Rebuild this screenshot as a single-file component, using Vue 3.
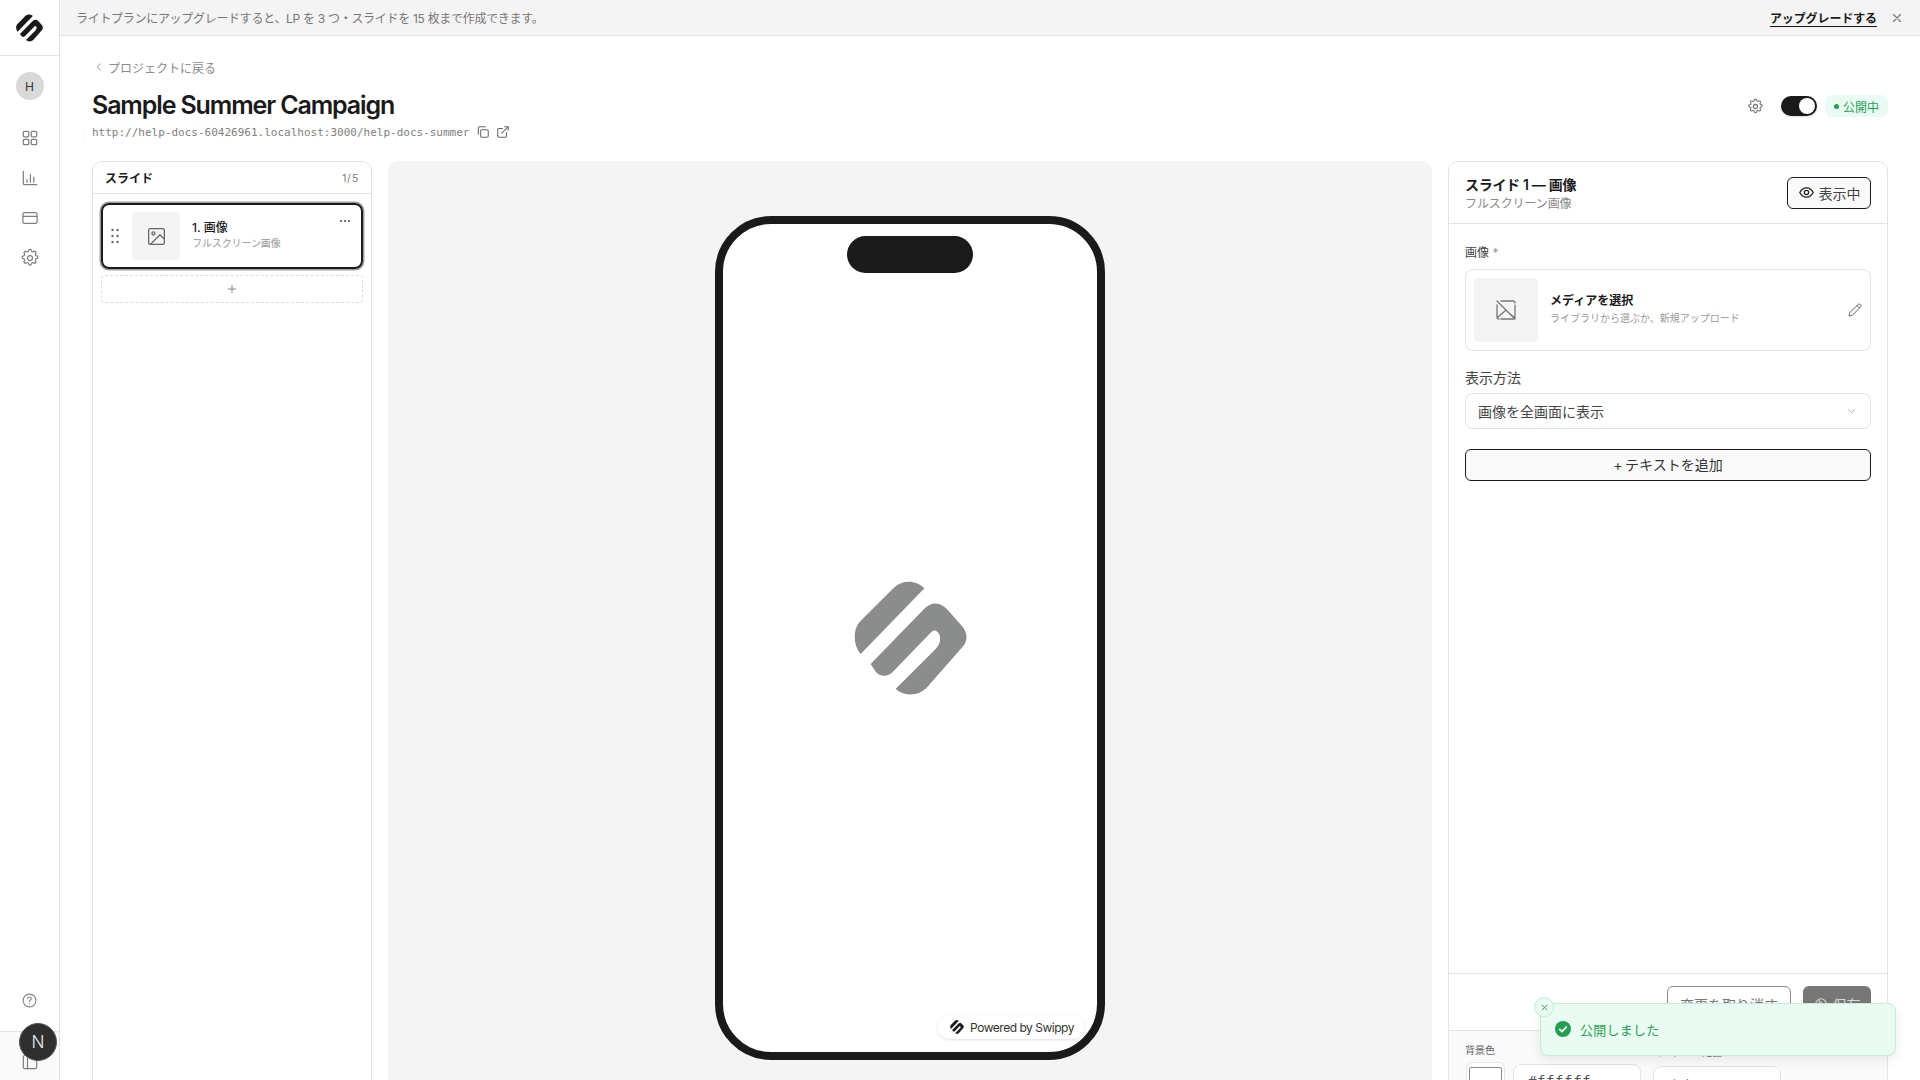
<template>
  <div class="app">
    <aside class="sidebar">
      <div class="side-logo">
        <svg width="27" height="28" viewBox="100 60 340 346"><path :d="logoPath" fill="#1a1a1a" /></svg>
      </div>
      <div class="side-nav">
        <div class="avatar">H</div>
        <svg class="nav-icon" viewBox="0 0 24 24"><rect x="4" y="4" width="6.500" height="6.500" rx="1.200" /><rect x="13.500" y="4" width="6.500" height="6.500" rx="1.200" /><rect x="4" y="13.500" width="6.500" height="6.500" rx="1.200" /><rect x="13.500" y="13.500" width="6.500" height="6.500" rx="1.200" /></svg>
        <svg class="nav-icon" viewBox="0 0 24 24"><path d="M4 4v14.500A1.500 1.500 0 0 0 5.500 20H20M8.500 17v-3M12.500 17V8M16.500 17v-6" /></svg>
        <svg class="nav-icon" viewBox="0 0 24 24"><rect x="3.500" y="5.500" width="17" height="13" rx="2" /><path d="M3.500 10h17" /></svg>
        <svg class="nav-icon" viewBox="0 0 24 24"><path :d="gearPath" /><circle cx="12" cy="12" r="3" /></svg>
      </div>
      <div class="side-bottom">
        <svg class="nav-icon help" viewBox="0 0 24 24"><circle cx="12" cy="12" r="9" /><path d="M9.500 9.500a2.500 2.500 0 1 1 3.700 2.200c-.8.500-1.200 1-1.200 1.800M12 16.800v.2" /></svg>
      </div>
      <div class="side-footer">
        <svg class="nav-icon peek" viewBox="0 0 24 24"><rect x="4" y="4" width="16" height="16" rx="2" /><path d="M9 4v16" /></svg>
      </div>
    </aside>

    <div class="main">
      <div class="banner">
        <span class="banner-text">ライトプランにアップグレードすると、LP を 3 つ・スライドを 15 枚まで作成できます。</span>
        <div class="banner-right">
          <a class="upgrade">アップグレードする</a>
          <svg class="banner-close" viewBox="0 0 24 24"><path d="M6 6l12 12M18 6L6 18" /></svg>
        </div>
      </div>

      <div class="content">
        <a class="back">
          <svg class="back-icon" viewBox="0 0 24 24"><path d="M15 6l-6 6 6 6" /></svg>
          プロジェクトに戻る
        </a>

        <div class="title-row">
          <div>
            <h1 class="title">Sample Summer Campaign</h1>
            <div class="url-row">
              <span class="url">http://help-docs-60426961.localhost:3000/help-docs-summer</span>
              <svg class="url-icon" viewBox="0 0 24 24"><rect x="8" y="8" width="13" height="13" rx="2" /><path d="M4 16V5a2 2 0 0 1 2-2h10" /></svg>
              <svg class="url-icon ext" viewBox="0 0 24 24"><path d="M18 13v6a2 2 0 0 1-2 2H5a2 2 0 0 1-2-2V8a2 2 0 0 1 2-2h6M15 3h6v6M10 14L21 3" /></svg>
            </div>
          </div>
          <div class="status">
            <svg class="status-gear" viewBox="0 0 24 24"><path :d="gearPath" /><circle cx="12" cy="12" r="3" /></svg>
            <div class="toggle"><span class="knob"></span></div>
            <div class="badge"><span class="dot"></span>公開中</div>
          </div>
        </div>

        <div class="workspace">
          <section class="panel slides">
            <div class="slides-head">
              <span class="slides-title">スライド</span>
              <span class="slides-count">1/5</span>
            </div>
            <div class="slides-body">
              <div v-for="slide in slides" :key="slide.id" class="slide-item">
                <svg class="drag" viewBox="0 0 8 16"><circle v-for="d in dragDots" :key="d.id" :cx="d.x" :cy="d.y" r="1.200" /></svg>
                <div class="slide-thumb">
                  <svg class="thumb-icon" viewBox="0 0 24 24"><rect x="3" y="3" width="18" height="18" rx="2" /><circle cx="8.500" cy="8.500" r="1.700" /><path d="M21 15l-5-5L5 21" /></svg>
                </div>
                <div class="slide-text">
                  <div class="slide-name">{{ slide.name }}</div>
                  <div class="slide-sub">{{ slide.sub }}</div>
                </div>
                <span class="slide-more"><i></i><i></i><i></i></span>
              </div>
              <div class="slide-add">
                <svg class="add-icon" viewBox="0 0 24 24"><path d="M12 5v14M5 12h14" /></svg>
              </div>
            </div>
          </section>

          <section class="canvas">
            <div class="phone">
              <div class="notch"></div>
              <svg class="phone-logo" viewBox="100 60 340 346"><path :d="logoPath" fill="#8b8d8c" /></svg>
              <div class="powered">
                <svg width="14" height="14" viewBox="100 60 340 346"><path :d="logoPath" fill="#1a1a1a" /></svg>
                Powered by Swippy
              </div>
            </div>
          </section>

          <section class="panel editor">
            <div class="editor-head">
              <div class="editor-heading">
                <div class="editor-title">スライド 1 — 画像</div>
                <div class="editor-sub">フルスクリーン画像</div>
              </div>
              <button class="view-btn">
                <svg class="eye" viewBox="0 0 24 24"><path d="M2.500 12S6 5.500 12 5.500 21.500 12 21.500 12 18 18.500 12 18.500 2.500 12 2.500 12z" /><circle cx="12" cy="12" r="3" /></svg>
                表示中
              </button>
            </div>

            <div class="editor-body">
              <div class="field-label small">画像 <span class="req">*</span></div>
              <div class="media">
                <div class="media-thumb">
                  <svg class="media-icon" viewBox="0 0 24 24"><path d="M3 3l18 18M21 7v12a2 2 0 0 1-2 2H7M3 7v12a2 2 0 0 0 2 2M7 3h12a2 2 0 0 1 2 2M3 20l9-8M15 15l6 5" /></svg>
                </div>
                <div class="media-text">
                  <div class="media-title">メディアを選択</div>
                  <div class="media-sub">ライブラリから選ぶか、新規アップロード</div>
                </div>
                <svg class="pencil" viewBox="0 0 24 24"><path d="M17 3.500a2.600 2.600 0 0 1 3.600 3.600L8 20l-5 1 1-5z" /><path d="M15 5.500l3.500 3.500" /></svg>
              </div>
              <div class="field-label">表示方法</div>
              <div class="select">
                <span>画像を全画面に表示</span>
                <svg class="chev" viewBox="0 0 24 24"><path d="M5 9l7 7 7-7" /></svg>
              </div>
              <button class="add-text">+ テキストを追加</button>
            </div>

            <div class="editor-actions">
              <button class="cancel">変更を取り消す</button>
              <button class="save">
                <svg class="save-icon" viewBox="0 0 24 24"><circle cx="12" cy="12" r="9" /><path d="M8 12h8v6H8zM9 5v4h5" /></svg>
                保存
              </button>
            </div>

            <div class="editor-settings">
              <div class="setting">
                <div class="setting-label">背景色</div>
                <div class="setting-row">
                  <span class="swatch-wrap"><span class="swatch"></span></span>
                  <span class="setting-input color">#ffffff</span>
                </div>
              </div>
              <div class="setting second">
                <div class="setting-label">コンテンツ配置</div>
                <span class="setting-input pos">中央</span>
              </div>
            </div>
          </section>
        </div>
      </div>
    </div>

    <div class="dev-badge">N</div>

    <div class="toast">
      <span class="toast-close">
        <svg viewBox="0 0 24 24"><path d="M6 6l12 12M18 6L6 18" /></svg>
      </span>
      <svg class="toast-check" viewBox="0 0 24 24"><circle cx="12" cy="12" r="12" fill="#23a04f" /><path d="M7 12.500l3.500 3.500L17 9" fill="none" stroke="#fff" stroke-width="2.600" stroke-linecap="round" stroke-linejoin="round" /></svg>
      <span class="toast-text">公開しました</span>
    </div>
  </div>
</template>

<script setup>
const logoPath = 'M312 82C298 68 282 62 265 62C248 62 233 68 220 80L118 182C107 194 102 210 102 228C102 248 108 265 120 280ZM150 310L310 145C332 122 358 122 380 145L420 190C444 215 444 240 425 260L320 380C292 408 255 408 225 385L345 265C362 248 364 224 350 212C344 207 338 208 332 214L215 335C198 350 178 348 165 332Z'
const gearPath = 'M10.300 3.300a1.700 1.700 0 0 1 3.400 0 1.700 1.700 0 0 0 2.600 1.100 1.700 1.700 0 0 1 2.400 2.400 1.700 1.700 0 0 0 1.100 2.600 1.700 1.700 0 0 1 0 3.400 1.700 1.700 0 0 0-1.100 2.600 1.700 1.700 0 0 1-2.400 2.400 1.700 1.700 0 0 0-2.600 1.100 1.700 1.700 0 0 1-3.400 0 1.700 1.700 0 0 0-2.600-1.100 1.700 1.700 0 0 1-2.400-2.400 1.700 1.700 0 0 0-1.100-2.600 1.700 1.700 0 0 1 0-3.400 1.700 1.700 0 0 0 1.100-2.600 1.700 1.700 0 0 1 2.400-2.400 1.700 1.700 0 0 0 2.600-1.100z'

const slides = [
  { id: 1, name: '1. 画像', sub: 'フルスクリーン画像' }
]

const dragDots = [
  { id: 1, x: 1.500, y: 2 }, { id: 2, x: 6.500, y: 2 },
  { id: 3, x: 1.500, y: 8 }, { id: 4, x: 6.500, y: 8 },
  { id: 5, x: 1.500, y: 14 }, { id: 6, x: 6.500, y: 14 }
]
</script>

<style>
html, body {
  margin: 0;
  height: 100%;
  overflow: hidden;
  background: #fff;
}
</style>

<style scoped>
.app {
  display: flex;
  height: 1080px;
  overflow: hidden;
  font-family: Inter, "Noto Sans CJK JP", sans-serif;
  color: #1a1a1a;
  position: relative;
}

svg {
  display: block;
  flex-shrink: 0;
}

/* sidebar */
.sidebar {
  width: 59px;
  border-right: 1px solid #e3e3e3;
  display: flex;
  flex-direction: column;
  align-items: stretch;
  flex-shrink: 0;
}
.side-logo {
  height: 55px;
  border-bottom: 1px solid #e3e3e3;
  display: flex;
  align-items: center;
  justify-content: center;
}
.side-nav {
  display: flex;
  flex-direction: column;
  align-items: center;
  padding-top: 16px;
  gap: 20px;
  flex: 1;
}
.avatar {
  width: 28px;
  height: 28px;
  border-radius: 50%;
  background: #d9d9d9;
  color: #333;
  font-size: 12px;
  display: flex;
  align-items: center;
  justify-content: center;
  margin-bottom: 8px;
}
.nav-icon {
  width: 20px;
  height: 20px;
  fill: none;
  stroke: #808080;
  stroke-width: 1.500;
  stroke-linecap: round;
  stroke-linejoin: round;
}
.side-bottom {
  height: 59px;
  display: flex;
  align-items: flex-start;
  justify-content: center;
  padding-top: 20px;
  box-sizing: border-box;
}
.help {
  width: 17px;
  height: 17px;
}
.side-footer {
  height: 49px;
  border-top: 1px solid #e3e3e3;
  background: #fafafa;
  display: flex;
  justify-content: center;
  padding-top: 20px;
  box-sizing: border-box;
}

/* banner */
.main {
  flex: 1;
  min-width: 0;
  display: flex;
  flex-direction: column;
}
.banner {
  height: 35px;
  flex-shrink: 0;
  background: #f4f4f4;
  border-bottom: 1px solid #e3e3e3;
  display: flex;
  align-items: center;
  justify-content: space-between;
  padding: 0 16px 0 16px;
}
.banner-text {
  font-size: 12px;
  letter-spacing: -0.3px;
  color: #777;
}
.banner-right {
  display: flex;
  align-items: center;
  gap: 13px;
}
.upgrade {
  font-size: 12px;
  font-weight: 700;
  letter-spacing: -0.1px;
  color: #1a1a1a;
  text-decoration: underline;
  text-underline-offset: 3px;
}
.banner-close {
  width: 14px;
  height: 14px;
  fill: none;
  stroke: #777;
  stroke-width: 2;
  stroke-linecap: round;
}

/* page head */
.content {
  padding: 22px 32px 0 32px;
  display: flex;
  flex-direction: column;
}
.back {
  display: flex;
  align-items: center;
  gap: 2px;
  font-size: 12px;
  color: #8a8a8a;
  height: 18px;
}
.back-icon {
  width: 14px;
  height: 14px;
  fill: none;
  stroke: #8a8a8a;
  stroke-width: 1.500;
}
.title-row {
  display: flex;
  justify-content: space-between;
  align-items: center;
  margin-top: 12px;
}
.title {
  margin: 0;
  font-size: 25px;
  line-height: 34px;
  font-weight: 600;
  letter-spacing: -0.045em;
  color: #1a1a1a;
}
.url-row {
  display: flex;
  align-items: center;
  margin-top: 2px;
  height: 16px;
}
.url {
  font-family: "DejaVu Sans Mono", monospace;
  font-size: 11px;
  color: #808080;
}
.url-icon {
  width: 14px;
  height: 14px;
  margin-left: 6px;
  fill: none;
  stroke: #666;
  stroke-width: 1.800;
  stroke-linecap: round;
  stroke-linejoin: round;
}
.status {
  display: flex;
  align-items: center;
  margin-bottom: 16px;
}
.status-gear {
  width: 17px;
  height: 17px;
  fill: none;
  stroke: #777;
  stroke-width: 1.600;
  stroke-linejoin: round;
  margin-right: 17px;
}
.toggle {
  width: 36px;
  height: 20px;
  border-radius: 10px;
  background: #1a1a1a;
  position: relative;
  margin-right: 8px;
  box-shadow: 0 1px 2px rgba(0, 0, 0, 0.15);
}
.knob {
  position: absolute;
  top: 2px;
  right: 2px;
  width: 16px;
  height: 16px;
  border-radius: 50%;
  background: #fff;
}
.badge {
  width: 63px;
  height: 22px;
  box-sizing: border-box;
  border-radius: 7px;
  background: #e9fbf2;
  color: #2a9d55;
  font-size: 12px;
  display: flex;
  align-items: center;
  justify-content: center;
  gap: 4px;
}
.dot {
  width: 5px;
  height: 5px;
  border-radius: 50%;
  background: #23a04f;
}

/* workspace */
.workspace {
  display: flex;
  height: 960px;
  margin-top: 21px;
}
.panel {
  border: 1px solid #e3e3e3;
  border-radius: 10px;
  box-sizing: border-box;
  background: #fff;
  overflow: hidden;
  flex-shrink: 0;
}
.slides {
  width: 280px;
}
.editor {
  width: 440px;
}

/* slide list */
.slides-head {
  height: 32px;
  box-sizing: border-box;
  border-bottom: 1px solid #e3e3e3;
  display: flex;
  align-items: center;
  justify-content: space-between;
  padding: 0 12px;
}
.slides-title {
  font-size: 12px;
  font-weight: 600;
}
.slides-count {
  font-size: 11px;
  letter-spacing: 0.06em;
  color: #888;
}
.slides-body {
  padding: 9px 8px 8px;
  display: flex;
  flex-direction: column;
  gap: 6px;
}
.slide-item {
  height: 66px;
  box-sizing: border-box;
  border: 2px solid #1a1a1a;
  border-radius: 8px;
  box-shadow: 0 0 0 1.500px #a0a0a0;
  display: flex;
  align-items: center;
  padding-left: 8px;
  position: relative;
}
.drag {
  width: 8px;
  height: 16px;
  fill: #666;
  margin-right: 13px;
}
.slide-thumb {
  width: 48px;
  height: 48px;
  background: #f4f4f4;
  border-radius: 4px;
  display: flex;
  align-items: center;
  justify-content: center;
  margin-right: 12px;
}
.thumb-icon {
  width: 21px;
  height: 21px;
  fill: none;
  stroke: #666;
  stroke-width: 1.500;
  stroke-linecap: round;
  stroke-linejoin: round;
}
.slide-text {
  padding-bottom: 2px;
}
.slide-name {
  font-size: 12px;
  font-weight: 500;
  line-height: 16px;
  color: #1a1a1a;
}
.slide-sub {
  font-size: 10px;
  line-height: 15px;
  letter-spacing: -0.1px;
  color: #999;
}
.slide-more {
  position: absolute;
  top: 15px;
  right: 11px;
  display: flex;
  gap: 2px;
}
.slide-more i {
  width: 2px;
  height: 2px;
  border-radius: 50%;
  background: #444;
}
.slide-add {
  height: 28px;
  box-sizing: border-box;
  border: 1px dashed #dcdcdc;
  border-radius: 4px;
  display: flex;
  align-items: center;
  justify-content: center;
}
.add-icon {
  width: 14px;
  height: 14px;
  fill: none;
  stroke: #777;
  stroke-width: 1.500;
}

/* phone preview */
.canvas {
  width: 1044px;
  margin: 0 16px;
  flex-shrink: 0;
  background: #f4f4f4;
  border-radius: 10px;
  padding-top: 55px;
  display: flex;
  justify-content: center;
  align-items: flex-start;
}
.phone {
  width: 390px;
  height: 844px;
  box-sizing: border-box;
  border: 8px solid #1a1a1a;
  border-radius: 56px;
  background: #fff;
  position: relative;
  display: flex;
  align-items: center;
  justify-content: center;
}
.notch {
  position: absolute;
  top: 12px;
  left: 124px;
  width: 126px;
  height: 37px;
  border-radius: 19px;
  background: #1a1a1a;
}
.phone-logo {
  width: 113px;
  height: 115px;
}
.powered {
  position: absolute;
  right: 12px;
  bottom: 13px;
  height: 24px;
  padding: 0 11px 0 12px;
  border-radius: 12px;
  background: #fff;
  box-shadow: 0 1px 3px rgba(0, 0, 0, 0.12);
  display: flex;
  align-items: center;
  gap: 6px;
  font-size: 12px;
  letter-spacing: -0.04em;
  color: #333;
}

/* editor */
.editor {
  display: flex;
  flex-direction: column;
}
.editor-head {
  height: 62px;
  flex-shrink: 0;
  box-sizing: border-box;
  border-bottom: 1px solid #e3e3e3;
  display: flex;
  align-items: center;
  justify-content: space-between;
  padding: 0 16px 0 16px;
}
.editor-heading {
  padding-top: 4px;
}
.editor-title {
  font-size: 14px;
  font-weight: 600;
  line-height: 19px;
  letter-spacing: -0.3px;
}
.editor-sub {
  font-size: 12px;
  line-height: 20px;
  letter-spacing: -0.1px;
  color: #888;
}
.view-btn {
  width: 84px;
  height: 32px;
  box-sizing: border-box;
  border: 1px solid #1a1a1a;
  border-radius: 6px;
  background: #fafafa;
  color: #444;
  font-family: inherit;
  font-size: 14px;
  display: flex;
  align-items: center;
  justify-content: center;
  gap: 4px;
  padding: 0;
}
.eye {
  width: 17px;
  height: 17px;
  fill: none;
  stroke: #222;
  stroke-width: 1.800;
}
.editor-body {
  flex: 1;
  padding: 20px 16px 0 16px;
  display: flex;
  flex-direction: column;
}
.field-label {
  font-size: 14px;
  line-height: 20px;
  color: #444;
  margin-top: 17px;
  margin-bottom: 5px;
}
.field-label.small {
  font-size: 12px;
  line-height: 18px;
  margin-top: 0;
  margin-bottom: 7px;
}
.req {
  color: #999;
}
.media {
  height: 82px;
  box-sizing: border-box;
  border: 1px solid #e3e3e3;
  border-radius: 8px;
  display: flex;
  align-items: center;
  padding: 0 7px 0 8px;
}
.media-thumb {
  width: 64px;
  height: 64px;
  border-radius: 4px;
  background: #f4f4f4;
  display: flex;
  align-items: center;
  justify-content: center;
  margin-right: 12px;
}
.media-icon {
  width: 24px;
  height: 24px;
  fill: none;
  stroke: #777;
  stroke-width: 1.300;
  stroke-linecap: round;
  stroke-linejoin: round;
}
.media-text {
  flex: 1;
  padding-bottom: 2px;
}
.media-title {
  font-size: 12px;
  font-weight: 600;
  line-height: 18px;
  color: #1a1a1a;
}
.media-sub {
  font-size: 10px;
  line-height: 16px;
  color: #999;
}
.pencil {
  width: 16px;
  height: 16px;
  fill: none;
  stroke: #666;
  stroke-width: 1.500;
  stroke-linejoin: round;
}
.select {
  height: 36px;
  box-sizing: border-box;
  border: 1px solid #e3e3e3;
  border-radius: 8px;
  display: flex;
  align-items: center;
  justify-content: space-between;
  padding: 0 12px 1px;
  font-size: 14px;
  color: #444;
}
.chev {
  width: 13px;
  height: 13px;
  fill: none;
  stroke: #aaa;
  stroke-width: 1.600;
}
.add-text {
  margin-top: 20px;
  height: 32px;
  box-sizing: border-box;
  border: 1px solid #1a1a1a;
  border-radius: 6px;
  background: #fafafa;
  color: #333;
  font-family: inherit;
  font-size: 14px;
  word-spacing: -1.500px;
  padding: 0 0 2px;
}
.editor-actions {
  height: 57px;
  flex-shrink: 0;
  box-sizing: border-box;
  border-top: 1px solid #e3e3e3;
  display: flex;
  justify-content: flex-end;
  gap: 12px;
  padding: 12px 16px 0 0;
}
.cancel {
  width: 124px;
  height: 36px;
  box-sizing: border-box;
  border: 1px solid #8a8a8a;
  border-radius: 6px;
  background: #fff;
  color: #777;
  font-family: inherit;
  font-size: 14px;
  padding: 0;
}
.save {
  width: 68px;
  height: 36px;
  border: 0;
  border-radius: 6px;
  background: #777;
  color: #ddd;
  font-family: inherit;
  font-size: 14px;
  padding: 0;
  display: flex;
  align-items: center;
  justify-content: center;
  gap: 5px;
}
.save-icon {
  width: 14px;
  height: 14px;
  fill: none;
  stroke: #ddd;
  stroke-width: 1.800;
}
.editor-settings {
  height: 90px;
  flex-shrink: 0;
  box-sizing: border-box;
  border-top: 1px solid #e3e3e3;
  background: #fafafa;
  display: flex;
  gap: 12px;
  padding: 12px 17px 0;
}
.setting-label {
  font-size: 10px;
  line-height: 14px;
  color: #666;
  margin-bottom: 7px;
  margin-left: -1px;
}
.second {
  padding-top: 2px;
}
.setting-row {
  display: flex;
  gap: 8px;
}
.swatch-wrap {
  width: 39px;
  height: 40px;
  box-sizing: border-box;
  margin-top: -2px;
  padding: 4px 2px;
  border: 1px solid #e6e6e6;
  border-radius: 6px;
  background: #fff;
  display: block;
}
.swatch {
  display: block;
  height: 32px;
  box-sizing: border-box;
  border: 1px solid #888;
  border-radius: 2px;
  background: #fff;
}
.setting-input {
  height: 38px;
  box-sizing: border-box;
  border: 1px solid #e3e3e3;
  border-radius: 8px;
  background: #fff;
  display: block;
  font-size: 13px;
  color: #555;
  padding: 8px 14px;
}
.color {
  width: 128px;
  font-family: "DejaVu Sans Mono", monospace;
  font-size: 14px;
  letter-spacing: 0.6px;
}
.pos {
  width: 128px;
}

/* overlays */
.dev-badge {
  position: absolute;
  left: 19px;
  top: 1023px;
  width: 38px;
  height: 38px;
  border-radius: 50%;
  background: #2f2f2f;
  border: 1px solid #555;
  box-sizing: border-box;
  color: #eee;
  font-size: 17px;
  font-weight: 300;
  display: flex;
  align-items: center;
  justify-content: center;
}
.toast {
  position: absolute;
  left: 1540px;
  top: 1003px;
  width: 356px;
  height: 53px;
  box-sizing: border-box;
  border: 1px solid #bdf0d5;
  border-radius: 8px;
  background: #e9fbf2;
  box-shadow: 0 4px 12px rgba(0, 0, 0, 0.08);
  display: flex;
  align-items: center;
  gap: 9px;
  padding: 0 0 1px 14px;
}
.toast-close {
  position: absolute;
  left: -7px;
  top: -7px;
  width: 20px;
  height: 20px;
  box-sizing: border-box;
  border: 1px solid #bdf0d5;
  border-radius: 50%;
  background: #e9fbf2;
  display: flex;
  align-items: center;
  justify-content: center;
}
.toast-close svg {
  width: 11px;
  height: 11px;
  fill: none;
  stroke: #1e8a45;
  stroke-width: 1.800;
}
.toast-check {
  width: 16px;
  height: 16px;
}
.toast-text {
  font-size: 13px;
  letter-spacing: 0.02em;
  color: #2a9d55;
}
</style>
